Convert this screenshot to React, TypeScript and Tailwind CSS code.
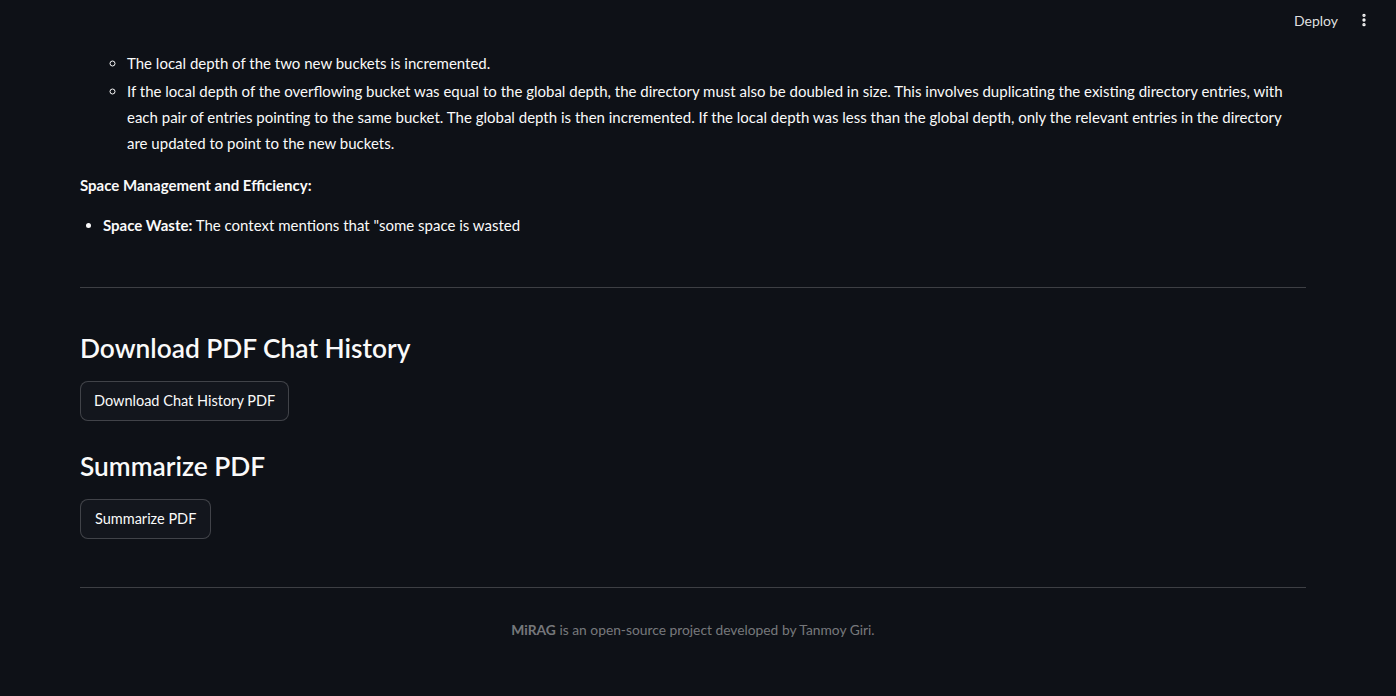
import { EllipsisVertical } from "lucide-react";

const font = { fontFamily: "'Lato', 'Noto Sans', sans-serif" };

export default function App() {
  return (
    <div className="min-h-screen w-full bg-[#0e1117] text-[#fafafa]" style={font}>
      {/* top toolbar */}
      <header className="flex h-[40px] items-center justify-end pr-[24px]">
        <span className="text-[14px] text-[#fafafa]/90">Deploy</span>
        <button className="ml-[18px] flex h-[24px] w-[16px] items-center justify-center text-[#fafafa]">
          <EllipsisVertical className="h-[18px] w-[18px]" strokeWidth={3} />
        </button>
      </header>

      <main className="mx-[80px] w-[1226px] pt-[10px]">
        <ul className="ml-[47px] w-[1168px] list-[circle] pl-0 text-[15px] leading-[26px]">
          <li className="mb-[2px]">The local depth of the two new buckets is incremented.</li>
          <li>
            If the local depth of the overflowing bucket was equal to the global depth, the directory must
            also be doubled in size. This involves duplicating the existing directory entries, with each pair
            of entries pointing to the same bucket. The global depth is then incremented. If the local depth
            was less than the global depth, only the relevant entries in the directory are updated to point to
            the new buckets.
          </li>
        </ul>

        <p className="mt-[16px] text-[15px] font-bold leading-[26px]">Space Management and Efficiency:</p>

        <ul className="mt-[14px] ml-[23px] list-disc text-[15px] leading-[26px]">
          <li>
            <span className="font-bold">Space Waste:</span> The context mentions that "some space is wasted
          </li>
        </ul>

        <hr className="mt-[49px] border-0 border-t border-[#fafafa]/20" />

        <section className="mt-[44px]">
          <h3 className="text-[26.3px] font-semibold leading-[32px]">Download PDF Chat History</h3>
          <button className="mt-[17px] flex h-[40px] items-center rounded-[8px] border border-[#fafafa]/20 bg-[#13161d] px-[13px] text-[14.5px]">
            Download Chat History PDF
          </button>
        </section>

        <section className="mt-[29px]">
          <h3 className="text-[26.3px] font-semibold leading-[32px]">Summarize PDF</h3>
          <button className="mt-[17px] flex h-[40px] items-center rounded-[8px] border border-[#fafafa]/20 bg-[#13161d] px-[14px] text-[14.5px]">
            Summarize PDF
          </button>
        </section>

        <hr className="mt-[48px] border-0 border-t border-[#fafafa]/20" />

        <footer className="mt-[32px] pb-[60px] text-center text-[13.8px] text-[#fafafa]/45">
          <span className="font-bold">MiRAG</span> is an open-source project developed by Tanmoy Giri.
        </footer>
      </main>
    </div>
  );
}
